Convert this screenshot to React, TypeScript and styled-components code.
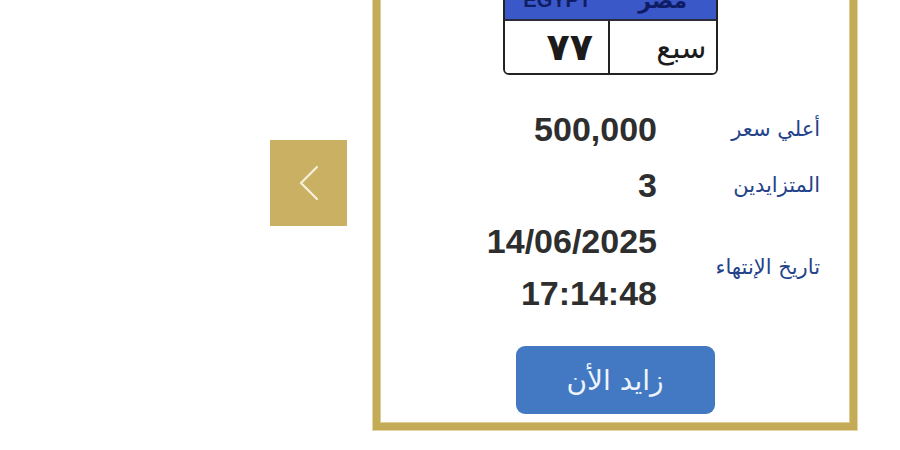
import styled, { createGlobalStyle } from "styled-components";

const GlobalStyle = createGlobalStyle`
  html, body {
    margin: 0;
    padding: 0;
    background: #ffffff;
  }
  body {
    font-family: "Liberation Sans", Arial, sans-serif;
  }
`;

const Stage = styled.div`
  width: 900px;
  height: 450px;
  overflow: hidden;
  display: flex;
  justify-content: flex-end;
  align-items: flex-start;
  gap: 26px;
  padding-right: 43px;
  box-sizing: border-box;
  background: #ffffff;
`;

const ArrowButton = styled.button`
  margin-top: 140px;
  width: 77px;
  height: 86px;
  border: none;
  padding: 0;
  background: #c9b062;
  display: flex;
  align-items: center;
  justify-content: center;
  cursor: pointer;
`;

const Card = styled.div`
  margin-top: -27px;
  width: 484px;
  box-sizing: border-box;
  border: 7px solid #c4ab57;
  box-shadow: 0 0 0 1px #e4d7a4, inset 0 0 0 1px #ddcd8e;
  background: #ffffff;
  display: flex;
  flex-direction: column;
  align-items: center;
  padding: 0 30px 9px 30px;
`;

const Plate = styled.div`
  width: 215px;
  box-sizing: border-box;
  border: 2px solid #222;
  border-radius: 0 0 6px 6px;
  overflow: hidden;
  margin-right: 10px;
  display: flex;
  flex-direction: column;
`;

const PlateRow = styled.div<{ $head?: boolean }>`
  display: grid;
  grid-template-columns: 1fr 1fr;
  height: ${(p) => (p.$head ? "37px" : "52px")};
  background: ${(p) => (p.$head ? "#3b58c9" : "#ffffff")};
  border-bottom: ${(p) => (p.$head ? "2px solid #2a2a3a" : "none")};
`;

const HeadCell = styled.div<{ $arabic?: boolean }>`
  display: flex;
  align-items: flex-end;
  justify-content: center;
  padding-bottom: ${(p) => (p.$arabic ? "7px" : "9px")};
  box-sizing: border-box;
  color: #0f1c66;
  font-weight: bold;
  line-height: 1;
  font-size: ${(p) => (p.$arabic ? "22px" : "20px")};
  font-family: ${(p) =>
    p.$arabic ? '"DejaVu Sans", sans-serif' : '"Liberation Sans", Arial, sans-serif'};
`;

const PlateCell = styled.div<{ $divider?: boolean }>`
  display: flex;
  align-items: center;
  justify-content: flex-end;
  padding-right: ${(p) => (p.$divider ? "15px" : "9px")};
  border-right: ${(p) => (p.$divider ? "2px solid #222" : "none")};
  color: #1b1b1b;
  font-family: "DejaVu Sans", sans-serif;
`;

const PlateDigits = styled.span`
  font-size: 38px;
  font-weight: bold;
  letter-spacing: -1px;
`;

const PlateLetters = styled.span`
  font-size: 30px;
`;

const InfoGrid = styled.div`
  direction: rtl;
  align-self: flex-end;
  margin-top: 28px;
  display: grid;
  grid-template-columns: 153px auto;
  column-gap: 10px;
  row-gap: 4px;
  align-items: center;
`;

const Label = styled.div`
  font-family: "DejaVu Sans", sans-serif;
  font-size: 21px;
  color: #24438a;
  white-space: nowrap;
`;

const Value = styled.div`
  direction: ltr;
  text-align: right;
  font-family: "Liberation Sans", Arial, sans-serif;
  font-weight: bold;
  font-size: 34px;
  line-height: 52px;
  color: #2e2e2e;
`;

const BidButton = styled.button`
  margin-top: 27px;
  width: 199px;
  height: 68px;
  border: none;
  border-radius: 9px;
  background: #4279c2;
  color: #eef3fb;
  font-family: "DejaVu Sans", sans-serif;
  font-size: 28px;
  cursor: pointer;
  display: flex;
  align-items: center;
  justify-content: center;
`;

export default function App() {
  return (
    <>
      <GlobalStyle />
      <Stage>
        <ArrowButton aria-label="previous">
          <svg width="22" height="36" viewBox="0 0 22 36">
            <path
              d="M19 2 L3 18 L19 34"
              fill="none"
              stroke="#f7f1dc"
              strokeWidth="2.2"
              strokeLinecap="round"
              strokeLinejoin="round"
            />
          </svg>
        </ArrowButton>
        <Card>
          <Plate>
            <PlateRow $head>
              <HeadCell>EGYPT</HeadCell>
              <HeadCell $arabic>مصر</HeadCell>
            </PlateRow>
            <PlateRow>
              <PlateCell $divider>
                <PlateDigits>٧٧</PlateDigits>
              </PlateCell>
              <PlateCell>
                <PlateLetters>سبع</PlateLetters>
              </PlateCell>
            </PlateRow>
          </Plate>
          <InfoGrid>
            <Label>أعلي سعر</Label>
            <Value>500,000</Value>
            <Label>المتزايدين</Label>
            <Value>3</Value>
            <Label>تاريخ الإنتهاء</Label>
            <Value>
              14/06/2025
              <br />
              17:14:48
            </Value>
          </InfoGrid>
          <BidButton>زايد الأن</BidButton>
        </Card>
      </Stage>
    </>
  );
}
